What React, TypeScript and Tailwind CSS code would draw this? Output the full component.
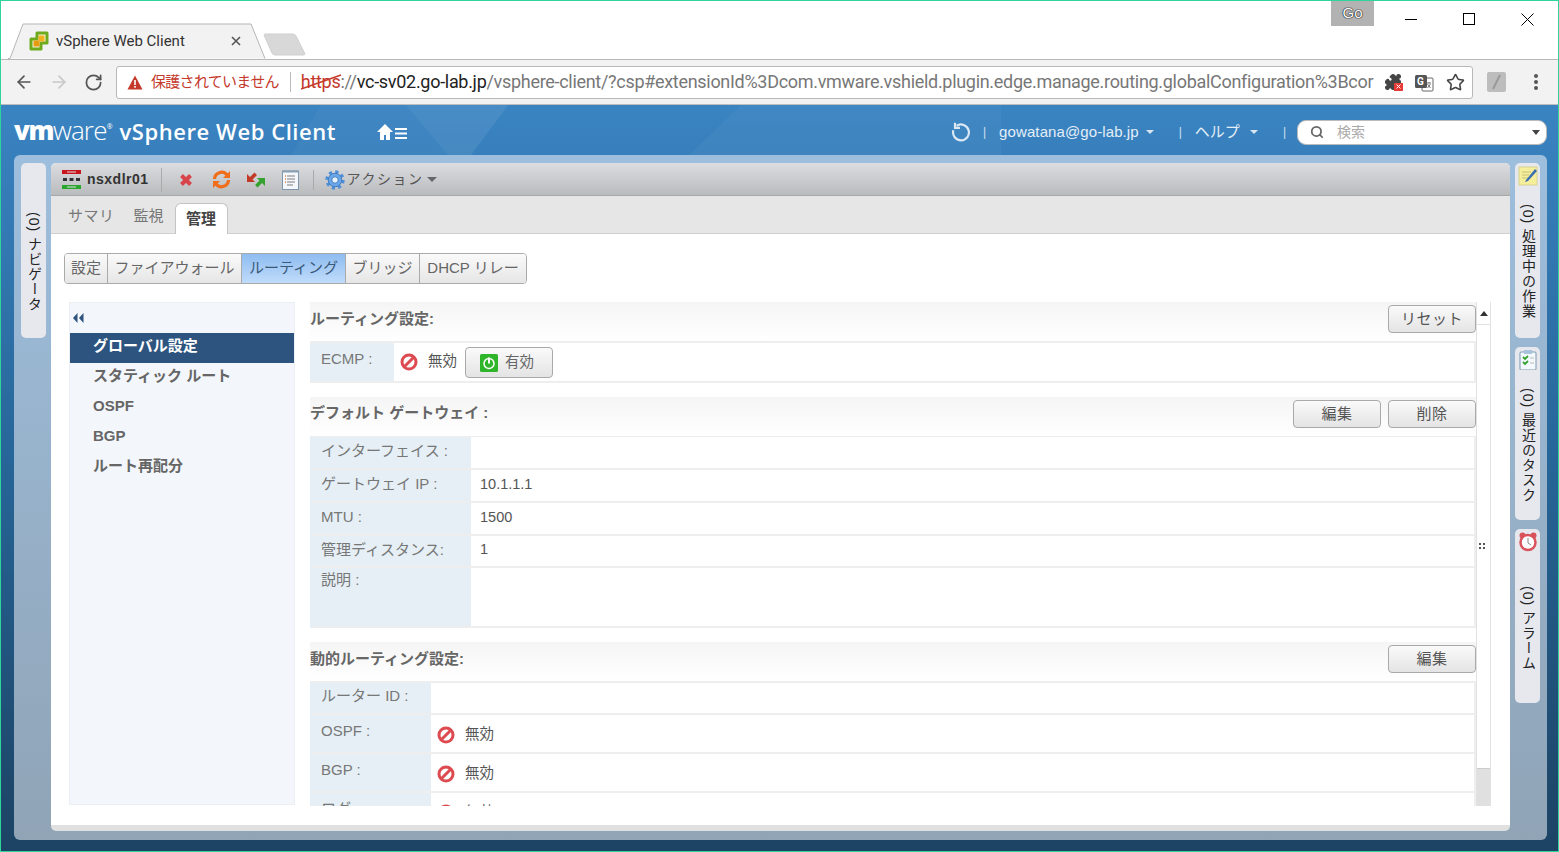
import React from "react";
import { ArrowLeft, ArrowRight, RotateCw, Star, Search, Puzzle } from "lucide-react";

const FONT = "font-['Liberation_Sans','Noto_Sans_CJK_JP',sans-serif]";

const BtnGradient = "bg-gradient-to-b from-[#fafafa] to-[#e4e4e4] border border-[#a9a9a9] rounded-[4px]";

/* red "no entry" icon used for disabled state */
const Disabled = () => (
  <svg width="18" height="18" viewBox="0 0 18 18" className="shrink-0">
    <circle cx="9" cy="9" r="7" fill="#fff" stroke="#dd4b50" strokeWidth="3" />
    <path d="M4.500 13.500 13.500 4.500" stroke="#dd4b50" strokeWidth="3" />
  </svg>
);

const PageButton = ({ children }: { children: React.ReactNode }) => (
  <button className={`${BtnGradient} w-[88px] h-[28px] text-[15px] text-[#555] tracking-[0.500px] flex items-center justify-center`}>
    {children}
  </button>
);

const SectionHead = ({
  title,
  className,
  titlePt = "pt-[6px]",
  children,
}: {
  title: string;
  className: string;
  titlePt?: string;
  children?: React.ReactNode;
}) => (
  <div className={`flex justify-between bg-gradient-to-b from-[#f5f5f5] to-white ${className}`}>
    <span className={`text-[15px] font-bold text-[#666] whitespace-nowrap ${titlePt}`}>{title}</span>
    <div className="flex gap-[7px] pt-[3px]">{children}</div>
  </div>
);

const Row = ({
  label,
  labelW,
  h,
  labelPt = "pt-[3px]",
  children,
}: {
  label: string;
  labelW: string;
  h: string;
  labelPt?: string;
  children?: React.ReactNode;
}) => (
  <div className={`flex ${h} border-b-2 border-[#eeeeee]`}>
    <div className={`${labelW} ${labelPt} shrink-0 bg-[#e5eff5] pl-[9px] text-[15px] text-[#777] whitespace-nowrap`}>{label}</div>
    <div className="flex-1 flex items-center text-[14.500px] text-[#555] pl-[9px] pb-[2px] bg-white">{children}</div>
  </div>
);

const DisabledValue = () => (
  <div className="flex items-center gap-[10px] -ml-[3px] mt-[4px]">
    <Disabled />
    <span className="text-[14.500px] text-[#555]">無効</span>
  </div>
);

const SideTab = ({
  icon,
  text,
  h,
  textTop,
}: {
  icon?: React.ReactNode;
  text: string;
  h: string;
  textTop: string;
}) => (
  <div className={`w-[25px] ${h} bg-[#e6e8ee] rounded-[5px] flex flex-col items-center shrink-0`}>
    {icon && <div className="mt-[3px] h-[22px]">{icon}</div>}
    <div className={`${textTop} [writing-mode:vertical-rl] text-[14px] text-[#222] whitespace-nowrap tracking-[1px]`}>{text}</div>
  </div>
);

const NavItem = ({ label, active }: { label: string; active?: boolean }) => (
  <div
    className={`h-[30px] pl-[23px] pb-[4px] flex items-center text-[15px] font-bold whitespace-nowrap ${
      active ? "bg-[#2c547f] text-white" : "text-[#666]"
    }`}
  >
    {label}
  </div>
);

const Segment = ({ label, w, active }: { label: string; w: string; active?: boolean }) => (
  <div
    className={`${w} flex items-center justify-center border-r border-[#aaa] last:border-r-0 text-[15px] whitespace-nowrap ${
      active ? "bg-gradient-to-b from-[#8fbcf0] to-[#c0dcfb] text-[#3a5a7c]" : "bg-gradient-to-b from-[#fafafa] to-[#e6e6e6] text-[#666]"
    }`}
  >
    {label}
  </div>
);

export default function App() {
  return (
    <div className={`${FONT} w-[1559px] h-[852px] overflow-hidden flex flex-col border border-[#2fd49b] bg-white`}>
      {/* Tab strip */}
      <div className="h-[58px] shrink-0 flex items-end relative">
        <div className="ml-[7px] w-[258px] h-[36px] relative">
          <svg width="258" height="36" className="absolute inset-0">
            <path d="M0 35.500H2L15 1H243L257 35.500" fill="#f2f2f2" stroke="#b5b5b5" strokeWidth="1" />
          </svg>
          <div className="relative h-full flex items-center pl-[21px]">
            <svg width="20" height="20" viewBox="0 0 20 20" className="shrink-0">
              <path d="M8 2H18V12H12V18H2V8H8Z" fill="#f4f4dc" stroke="#6fa91e" strokeWidth="3" strokeLinejoin="round" />
              <rect x="9.500" y="4.500" width="6" height="6" fill="#f1b21e" />
              <rect x="4.500" y="9.500" width="6" height="6" fill="#e79a12" />
            </svg>
            <span className="ml-[7px] text-[15px] text-[#333] whitespace-nowrap font-['Roboto','Noto_Sans_CJK_JP',sans-serif]">vSphere Web Client</span>
            <svg width="10" height="10" viewBox="0 0 10 10" className="ml-[46px] shrink-0">
              <path d="M1 1 9 9M9 1 1 9" stroke="#555" strokeWidth="1.600" />
            </svg>
          </div>
        </div>
        <svg width="46" height="24" className="mb-[2px] -ml-[3px] shrink-0">
          <path d="M1 2Q1 1 3 1H30Q32 1 33 3L42 21Q42 22 40 22H12Q10 22 9 20Z" fill="#d8d8d8" stroke="#cfcfcf" />
        </svg>
        <div className="flex-1" />
        <div className="self-start flex items-start mr-[2px]">
          <div className="w-[43px] h-[25px] bg-[#b2b2b2] flex items-center justify-center text-[15px] text-white mr-[8px] [text-shadow:0_0_1px_#111,0_0_1px_#111,0_0_1px_#111]">Go</div>
          <div className="w-[58px] h-[36px] flex items-center justify-center">
            <div className="w-[12px] h-px bg-black" />
          </div>
          <div className="w-[58px] h-[36px] flex items-center justify-center">
            <div className="w-[12px] h-[12px] border border-black" />
          </div>
          <div className="w-[58px] h-[36px] flex items-center justify-center">
            <svg width="13" height="13" viewBox="0 0 13 13">
              <path d="M.5.5l12 12M12.500.5l-12 12" stroke="#000" strokeWidth="1" />
            </svg>
          </div>
        </div>
      </div>

      {/* Toolbar */}
      <div className="h-[46px] shrink-0 bg-[#f2f2f2] border-t border-t-[#b8b8b8] border-b border-b-[#bdbdbd] flex items-center">
        <ArrowLeft className="ml-[13px] w-[20px] h-[20px] text-[#555]" strokeWidth={2} />
        <ArrowRight className="ml-[15px] w-[20px] h-[20px] text-[#c8c8c8]" strokeWidth={2} />
        <RotateCw className="ml-[15px] w-[19px] h-[19px] text-[#555]" strokeWidth={2.200} />
        <div className="ml-[13px] w-[1357px] h-[33px] shrink-0 bg-white border border-[#b8b8b8] rounded-[3px] flex items-center pl-[10px] relative font-['Roboto','Noto_Sans_CJK_JP',sans-serif]">
          <svg width="16" height="15" viewBox="0 0 16 15" className="shrink-0">
            <path d="M8 .500 15.500 14.500H.500Z" fill="#c5392b" />
            <rect x="7.200" y="5" width="1.600" height="5" fill="#fff" />
            <rect x="7.200" y="11" width="1.600" height="1.700" fill="#fff" />
          </svg>
          <span className="ml-[8px] text-[15px] tracking-[-0.700px] text-[#c5392b] whitespace-nowrap">保護されていません</span>
          <div className="ml-[11px] w-px h-[20px] bg-[#bbb] shrink-0" />
          <div className="ml-[10px] relative w-[1073px] shrink-0 overflow-hidden text-[18px] leading-[24px] whitespace-nowrap tracking-[-0.300px]">
            <span className="text-[#c5392b]">https</span>
            <span className="text-[#777]">://</span>
            <span className="text-[#222]">vc-sv02.go-lab.jp</span>
            <span className="text-[#777]">/vsphere-client/?csp#extensionId%3Dcom.vmware.vshield.plugin.edge.manage.routing.globalConfiguration%3Bcor</span>
            <svg width="42" height="16" className="absolute left-0 top-[4px]">
              <path d="M0 15 40 1" stroke="#c5392b" strokeWidth="1.600" />
            </svg>
          </div>
          {/* extension puzzle, translate, star */}
          <div className="relative ml-[4px] h-full flex-1">
            <Puzzle className="absolute left-[6px] top-[6px] w-[18px] h-[18px] text-[#444]" fill="#444" strokeWidth={1.500} />
            <span className="absolute left-[16px] top-[16px] w-[9px] h-[8px] bg-[#e53a35] flex items-center justify-center">
              <svg width="5" height="5" viewBox="0 0 5 5">
                <path d="M.5.5l4 4m0-4-4 4" stroke="#fff" strokeWidth="1" />
              </svg>
            </span>
            <svg width="20" height="20" viewBox="0 0 20 20" className="absolute left-[36px] top-[6px]">
              <rect x="8" y="5" width="11" height="13" rx="1" fill="#fff" stroke="#666" />
              <rect x="1" y="2" width="12" height="13" rx="1.500" fill="#555" />
              <text x="3" y="12" fontSize="10" fontWeight="bold" fill="#fff">G</text>
              <path d="M13 10h4M15 9v1M13.500 15l3-4M16.500 15l-3-4" stroke="#555" strokeWidth="0.800" fill="none" />
            </svg>
            <Star className="absolute left-[68px] top-[6px] w-[19px] h-[19px] text-[#444]" strokeWidth={2} />
          </div>
        </div>
        <div className="ml-[14px] w-[19px] h-[20px] rounded-[2px] bg-[#bdbdbd] flex items-center justify-center">
          <svg width="19" height="20" viewBox="0 0 19 20">
            <path d="M6 17 13 3" stroke="#999" strokeWidth="2" />
          </svg>
        </div>
        <div className="ml-[28px] flex flex-col gap-[2.500px]">
          <div className="w-[4px] h-[3.500px] rounded-full bg-[#555]" />
          <div className="w-[4px] h-[3.500px] rounded-full bg-[#555]" />
          <div className="w-[4px] h-[3.500px] rounded-full bg-[#555]" />
        </div>
      </div>

      {/* vSphere app */}
      <div className="flex-1 flex flex-col bg-gradient-to-b from-[#3a84c2] via-[#266496] to-[#1c4364] relative overflow-hidden">
        <svg width="1559" height="52" className="absolute left-0 top-0 pointer-events-none">
          <path d="M405 0H507L470 50H447Z" fill="#fff" fillOpacity="0.08" />
          <path d="M320 0H405L447 50H290Z" fill="#fff" fillOpacity="0.03" />
          <path d="M740 0H1000V50H688Z" fill="#fff" fillOpacity="0.035" />
        </svg>
        {/* Header */}
        <div className="h-[50px] shrink-0 flex items-center text-white relative pt-[4px]">
          <div className="ml-[13px] -mt-[4px] flex items-baseline font-['Open_Sans','Liberation_Sans',sans-serif] leading-none">
            <span className="text-[26px] font-extrabold tracking-[-1.500px]">vm</span>
            <span className="text-[26px] font-light tracking-[-0.800px]">ware</span>
            <span className="text-[7px] self-start mt-[6px]">®</span>
            <span className="ml-[7px] text-[22px] font-semibold tracking-[0.560px] whitespace-nowrap">vSphere Web Client</span>
          </div>
          <svg width="32" height="18" viewBox="0 0 32 18" className="ml-[41px] shrink-0">
            <path d="M8 1 0 9h3v8h4v-5h2v5h4V9h3Z" fill="#fff" />
            <path d="M18 5h12v2H18zM18 9.500h12v2H18zM18 14h12v2H18z" fill="#fff" />
          </svg>
          <div className="flex-1" />
          <svg width="20" height="20" viewBox="0 0 24 24" fill="none" stroke="#dce9f5" strokeWidth="2.600" className="shrink-0">
            <path d="M8 4.500A9.500 9.500 0 1 1 4 10" />
            <path d="M6 1v6h6" />
          </svg>
          <span className="ml-[13px] text-[#cfe0f0] text-[12px]">|</span>
          <span className="ml-[13px] text-[15px] text-[#e4eef7] tracking-[0.100px] whitespace-nowrap">gowatana@go-lab.jp</span>
          <span className="ml-[7px] w-0 h-0 border-x-[4px] border-x-transparent border-t-[4px] border-t-[#d8e6f2]" />
          <span className="ml-[25px] text-[#cfe0f0] text-[12px]">|</span>
          <span className="ml-[13px] text-[15px] text-[#e4eef7] whitespace-nowrap">ヘルプ</span>
          <span className="ml-[10px] w-0 h-0 border-x-[4px] border-x-transparent border-t-[4px] border-t-[#d8e6f2]" />
          <span className="ml-[25px] text-[#cfe0f0] text-[12px]">|</span>
          <div className="ml-[11px] mr-[11px] w-[250px] h-[25px] shrink-0 bg-white rounded-[9px] border border-[#bbb] flex items-center pl-[12px] relative">
            <Search className="w-[14px] h-[14px] text-[#666]" strokeWidth={3} />
            <span className="ml-[13px] text-[14px] text-[#aaa]">検索</span>
            <span className="absolute right-[6px] top-[9px] w-0 h-0 border-x-[4px] border-x-transparent border-t-[5px] border-t-[#444]" />
          </div>
        </div>

        {/* Canvas */}
        <div className="ml-[13px] mr-[11px] h-[685px] rounded-[6px] bg-gradient-to-b from-[#9dbedd] to-[#90a4b6] flex pt-[8px] pl-[7px] pr-[7px] gap-[5px] relative">
          {/* left collapsed */}
          <SideTab text="(0) ナビゲータ" h="h-[175px]" textTop="mt-[49px]" />

          {/* Main panel */}
          <div className="w-[1459px] h-[668px] bg-white rounded-[5px] flex flex-col overflow-hidden border-b-[6px] border-[#e0e0e0]">
            {/* Object title bar */}
            <div className="h-[33px] shrink-0 bg-gradient-to-b from-[#dcdde0] to-[#b9bbbd] border-b border-[#a8a8a8] flex items-center pl-[11px] pt-px">
              <svg width="19" height="19" viewBox="0 0 19 19" className="shrink-0">
                <rect x="0" y="0" width="19" height="4" fill="#c8141c" />
                <rect x="0" y="15" width="19" height="4" fill="#2aa52e" />
                <rect x="5" y="1.500" width="9" height="1" fill="#ddd" />
                <rect x="5" y="16.500" width="9" height="1" fill="#ddd" />
                <rect x="1" y="8" width="4" height="3" fill="#333" />
                <rect x="7.500" y="8" width="4" height="3" fill="#333" />
                <rect x="14" y="8" width="4" height="3" fill="#333" />
              </svg>
              <span className="ml-[6px] text-[14px] font-bold text-[#333] tracking-[0.500px]">nsxdlr01</span>
              <div className="ml-[12px] w-px h-[24px] bg-[#aaa]" />
              <svg width="12" height="12" viewBox="0 0 12 12" className="ml-[18px]">
                <path d="M1.500 1.500 10.500 10.500M10.500 1.500 1.500 10.500" stroke="#d9434a" strokeWidth="4" />
              </svg>
              <svg width="19" height="19" viewBox="0 0 19 19" fill="none" className="ml-[20px]">
                <path d="M2.500 9A7 7 0 0 1 15 5" stroke="#f06d1a" strokeWidth="3.200" />
                <path d="M16.500 10A7 7 0 0 1 4 14" stroke="#f06d1a" strokeWidth="3.200" />
                <path d="M18 1v7h-7ZM1 18v-7h7Z" fill="#f06d1a" />
              </svg>
              <svg width="20" height="18" viewBox="0 0 20 18" className="ml-[15px]">
                <path d="M1 3v8h8L6.500 8.500 11 4 8.500 1.500 4 6Z" fill="#c23a26" />
                <path d="M19 7H11l2.500 2.500L9 14l2.500 2.500L16 12l3 3Z" fill="#35a22f" />
              </svg>
              <svg width="17" height="20" viewBox="0 0 17 20" className="ml-[16px]">
                <rect x="0.500" y="1" width="16" height="18.500" fill="#f4f8fc" stroke="#7f97ad" />
                <rect x="0.500" y="0.500" width="16" height="2" fill="#8aa0b4" />
                <path d="M5 6h8M5 9h8M5 12h8M5 15h6" stroke="#a5a5a5" strokeWidth="1.500" />
                <path d="M3 6h1M3 9h1M3 12h1" stroke="#e0823a" strokeWidth="1.500" />
              </svg>
              <div className="ml-[14px] w-px h-[20px] bg-[#aaa]" />
              <svg width="20" height="20" viewBox="0 0 20 20" className="ml-[11px]">
                <circle cx="10" cy="10" r="8.200" fill="none" stroke="#4f8fd8" strokeWidth="3" strokeDasharray="3.200 3.240" />
                <circle cx="10" cy="10" r="6.800" fill="#6aa6e8" stroke="#2c6fb8" strokeWidth="0.800" />
                <circle cx="10" cy="10" r="3.200" fill="#e8f2fc" stroke="#2c6fb8" strokeWidth="0.800" />
              </svg>
              <span className="ml-[2px] text-[14px] text-[#555] tracking-[1.500px] whitespace-nowrap">アクション</span>
              <span className="ml-[4px] w-0 h-0 border-x-[5px] border-x-transparent border-t-[5px] border-t-[#666]" />
            </div>

            {/* Tabs */}
            <div className="h-[38px] shrink-0 bg-[#e6e6e6] border-b border-[#d0d0d0] flex items-end pl-[17px] text-[15px]">
              <span className="text-[#777] pb-[6px] tracking-[0.500px]">サマリ</span>
              <span className="ml-[19px] text-[#777] pb-[6px]">監視</span>
              <div className="ml-[11px] w-[53px] h-[31px] -mb-px bg-white border border-b-0 border-[#c4c4c4] rounded-t-[6px] flex items-center justify-center font-bold text-[#444]">
                管理
              </div>
            </div>

            {/* Sub tabs */}
            <div className="mt-[19px] ml-[13px] w-[463px] h-[31px] shrink-0 flex border border-[#aaa] rounded-[4px] overflow-hidden">
              <Segment label="設定" w="w-[43px]" />
              <Segment label="ファイアウォール" w="w-[134px]" />
              <Segment label="ルーティング" w="w-[104px]" active />
              <Segment label="ブリッジ" w="w-[74px]" />
              <Segment label="DHCP リレー" w="w-[106px]" />
            </div>

            {/* Routing */}
            <div className="mt-[18px] ml-[18px] flex h-[504px] shrink-0">
              {/* nav */}
              <div className="w-[226px] h-[503px] shrink-0 bg-[#f3f7fb] border border-[#ebeff3]">
                <div className="h-[30px] flex items-center pl-[1px]">
                  <svg width="14" height="10" viewBox="0 0 14 10">
                    <path d="M6.500 0v10L2 5ZM12.500 0v10L8 5Z" fill="#2c547f" />
                  </svg>
                </div>
                <NavItem label="グローバル設定" active />
                <NavItem label="スタティック ルート" />
                <NavItem label="OSPF" />
                <NavItem label="BGP" />
                <NavItem label="ルート再配分" />
              </div>

              {/* content */}
              <div className="ml-[15px] w-[1166px] h-[504px] shrink-0 overflow-hidden">
                <SectionHead title="ルーティング設定:" className="h-[39px]">
                  <PageButton>リセット</PageButton>
                </SectionHead>
                <div className="h-[42px] border-2 border-[#eeeeee] border-l-0 flex">
                  <div className="w-[84px] bg-[#e5eff5] pl-[11px] pt-[5px] text-[15px] text-[#777]">ECMP :</div>
                  <div className="flex-1 flex items-center pl-[6px] bg-white">
                    <Disabled />
                    <span className="ml-[10px] text-[14.500px] text-[#555]">無効</span>
                    <button className={`${BtnGradient} ml-[8px] mt-px w-[88px] h-[31px] flex items-center pl-[14px] gap-[7px] text-[14.500px] text-[#666]`}>
                      <svg width="18" height="18" viewBox="0 0 18 18">
                        <rect width="18" height="18" rx="1.500" fill="#2fb52a" />
                        <circle cx="9" cy="9.500" r="5" fill="none" stroke="#fff" strokeWidth="1.500" />
                        <path d="M9 3.500v6" stroke="#fff" strokeWidth="2" />
                      </svg>
                      有効
                    </button>
                  </div>
                </div>

                <SectionHead title="デフォルト ゲートウェイ :" className="h-[39px] mt-[14px]" titlePt="pt-[5px]">
                  <PageButton>編集</PageButton>
                  <PageButton>削除</PageButton>
                </SectionHead>
                <div className="border-t border-x-2 border-[#eeeeee] border-l-[#e5eff5] border-r-[#eeeeee]">
                  <Row label="インターフェイス :" labelW="w-[159px]" h="h-[33px]" />
                  <Row label="ゲートウェイ IP :" labelW="w-[159px]" h="h-[33px]">10.1.1.1</Row>
                  <Row label="MTU :" labelW="w-[159px]" h="h-[33px]">1500</Row>
                  <Row label="管理ディスタンス:" labelW="w-[159px]" h="h-[32px]">1</Row>
                  <Row label="説明 :" labelW="w-[159px]" h="h-[60px]" labelPt="pt-px" />
                </div>

                <SectionHead title="動的ルーティング設定:" className="h-[39px] mt-[14px]">
                  <PageButton>編集</PageButton>
                </SectionHead>
                <div className="border-t-2 border-x-2 border-[#eeeeee] border-l-[#e5eff5] border-r-[#eeeeee]">
                  <Row label="ルーター ID :" labelW="w-[119px]" h="h-[32px]" labelPt="pt-[2px]" />
                  <Row label="OSPF :" labelW="w-[119px]" h="h-[39px]" labelPt="pt-[5px]">
                    <DisabledValue />
                  </Row>
                  <Row label="BGP :" labelW="w-[119px]" h="h-[39px]" labelPt="pt-[5px]">
                    <DisabledValue />
                  </Row>
                  <Row label="ログ :" labelW="w-[119px]" h="h-[39px]" labelPt="pt-[5px]">
                    <DisabledValue />
                  </Row>
                </div>
              </div>

              {/* scrollbar */}
              <div className="w-[15px] h-[504px] shrink-0 flex flex-col border-x border-[#e2e2e2] relative">
                <div className="h-[23px] flex items-center justify-center border-b border-[#e2e2e2] bg-white">
                  <span className="w-0 h-0 border-x-[4px] border-x-transparent border-b-[5px] border-b-[#333]" />
                </div>
                <div className="flex-1 bg-white" />
                <div className="h-[38px] bg-[#e0e0e0] border-t border-[#ccc]" />
                {/* resize grip */}
                <div className="absolute left-[2px] top-[241px] grid grid-cols-2 gap-[2px]">
                  <span className="w-[2px] h-[2px] bg-[#555]" />
                  <span className="w-[2px] h-[2px] bg-[#555]" />
                  <span className="w-[2px] h-[2px] bg-[#555]" />
                  <span className="w-[2px] h-[2px] bg-[#555]" />
                </div>
              </div>
            </div>
          </div>

          {/* right collapsed */}
          <div className="flex flex-col gap-[9px]">
            <SideTab
              h="h-[175px]"
              textTop="mt-[16px]"
              text="(0) 処理中の作業"
              icon={
                <svg width="20" height="20" viewBox="0 0 20 20">
                  <rect x="1" y="1" width="18" height="18" fill="#f5ee9b" stroke="#d8d290" />
                  <path d="M4 6h9M4 9h7M4 12h6" stroke="#c8c27a" />
                  <path d="M8 14 17 3l2 2-9 10-3 1Z" fill="#3c6fb0" />
                </svg>
              }
            />
            <SideTab
              h="h-[173px]"
              textTop="mt-[16px]"
              text="(0) 最近のタスク"
              icon={
                <svg width="20" height="20" viewBox="0 0 20 20">
                  <rect x="2" y="2" width="16" height="18" rx="1" fill="#f3f8fc" stroke="#7a97ad" />
                  <rect x="6" y="0" width="8" height="4" fill="#a8c4dc" />
                  <path d="M5 7l2 2 3-3M5 12l2 2 3-3" fill="none" stroke="#35a22f" strokeWidth="1.800" />
                  <path d="M12 8h4M12 13h4" stroke="#bbb" />
                </svg>
              }
            />
            <SideTab
              h="h-[174px]"
              textTop="mt-[32px]"
              text="(0) アラーム"
              icon={
                <svg width="20" height="20" viewBox="0 0 20 20">
                  <circle cx="4.500" cy="3.500" r="3" fill="#d9535a" />
                  <circle cx="15.500" cy="3.500" r="3" fill="#d9535a" />
                  <circle cx="10" cy="10.500" r="7.500" fill="#fff" stroke="#d9535a" strokeWidth="2.500" />
                  <path d="M10 6v5l3 2" stroke="#888" fill="none" />
                </svg>
              }
            />
          </div>
        </div>
      </div>
    </div>
  );
}
